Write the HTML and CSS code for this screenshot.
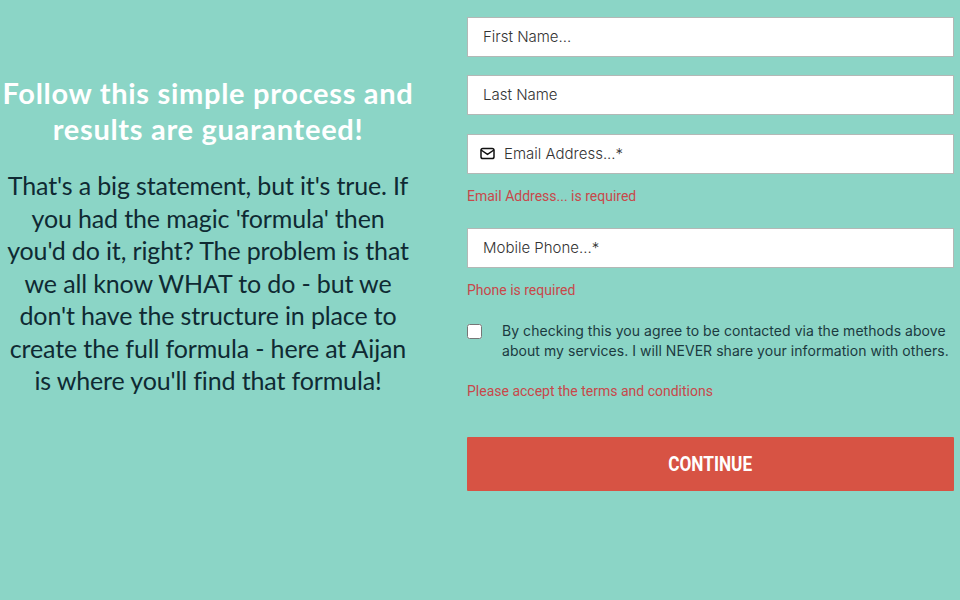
FILE: index.html
```html
<!DOCTYPE html>
<html lang="en">
<head>
  <meta charset="UTF-8" />
  <meta name="viewport" content="width=device-width, initial-scale=1.0"/>
  <title>Aijan</title>
  <link rel="stylesheet" href="styles.css">
</head>
<body>

  <div class="page">
    <div class="intro">
      <h1 class="headline">Follow this simple process and results are guaranteed!</h1>
      <p class="blurb">That's a big statement, but it's true. If you had the magic 'formula' then you'd do it, right? The problem is that we all know WHAT to do - but we don't have the structure in place to create the full formula - here at Aijan is where you'll find that formula!</p>
    </div>

    <form class="signup">
      <div class="field"><input type="text" placeholder="First Name..." /></div>
      <div class="field"><input type="text" placeholder="Last Name" /></div>
      <div class="field with-icon">
        <svg class="mail-icon" viewBox="0 0 16 14" width="15" height="13" fill="none" stroke="#111" stroke-width="1.6" stroke-linejoin="round" stroke-linecap="round">
          <rect x="1" y="1.5" width="14" height="11" rx="2"/>
          <path d="M1.5 3.5 8 8l6.5-4.5"/>
        </svg>
        <input type="email" placeholder="Email Address...*" />
      </div>
      <div class="error">Email Address... is required</div>
      <div class="field"><input type="tel" placeholder="Mobile Phone...*" /></div>
      <div class="error">Phone is required</div>
      <label class="consent">
        <input type="checkbox" />
        <span>By checking this you agree to be contacted via the methods above about my services. I will NEVER share your information with others.</span>
      </label>
      <div class="error terms">Please accept the terms and conditions</div>
      <button type="button" class="continue"><span>CONTINUE</span></button>
    </form>
  </div>

</body>
</html>
```

FILE: styles.css
```css
* {
  margin: 0;
  padding: 0;
  box-sizing: border-box;
}

body {
  background: #8bd5c6;
  min-height: 100vh;
  overflow: hidden;
}

.page {
  display: grid;
  grid-template-columns: 416px 487px;
  column-gap: 51px;
  padding-top: 17px;
}

.intro {
  padding-top: 58px;
  text-align: center;
}

.headline {
  font-family: "Lato", sans-serif;
  font-size: 29px;
  font-weight: 700;
  line-height: 35.5px;
  letter-spacing: 0.7px;
  color: #fff;
}

.blurb {
  margin-top: 23px;
  font-family: "Lato", sans-serif;
  font-size: 25px;
  line-height: 32.5px;
  letter-spacing: -0.14px;
  color: #0f2a33;
}

.field {
  display: flex;
  align-items: center;
  height: 40px;
  margin-bottom: 18.4px;
  padding: 0 0 1px 15px;
  background: #fff;
  border: 1px solid #b3b8b6;
}

.field input {
  flex: 1;
  min-width: 0;
  border: none;
  outline: none;
  background: transparent;
  font-family: "Inter", sans-serif;
  font-size: 15px;
  font-weight: 300;
  color: #333;
}

.field input::placeholder {
  color: #333;
  opacity: 1;
}

.with-icon {
  padding-left: 12px;
}

.mail-icon {
  flex-shrink: 0;
  margin-right: 9px;
}

.error {
  margin: -6.4px 0 21.8px;
  font-family: "Roboto", sans-serif;
  font-size: 14px;
  line-height: 20px;
  color: #c8484a;
}

.consent {
  display: flex;
  align-items: flex-start;
  gap: 20px;
  margin-top: -0.8px;
  font-family: "Inter", sans-serif;
  font-size: 14px;
  line-height: 20px;
  letter-spacing: 0.05px;
  color: #1b3a40;
}

.consent input {
  flex-shrink: 0;
  width: 15px;
  height: 15px;
  margin-top: 3px;
}

.terms {
  margin: 20px 0 36px;
}

.continue {
  display: block;
  width: 100%;
  height: 54px;
  border: none;
  border-radius: 1px;
  background: #d75344;
  color: #fff;
  font-family: "Roboto", sans-serif;
  font-size: 21px;
  font-weight: 700;
  cursor: pointer;
}

.continue span {
  display: inline-block;
  transform: scaleX(0.82);
}
```
